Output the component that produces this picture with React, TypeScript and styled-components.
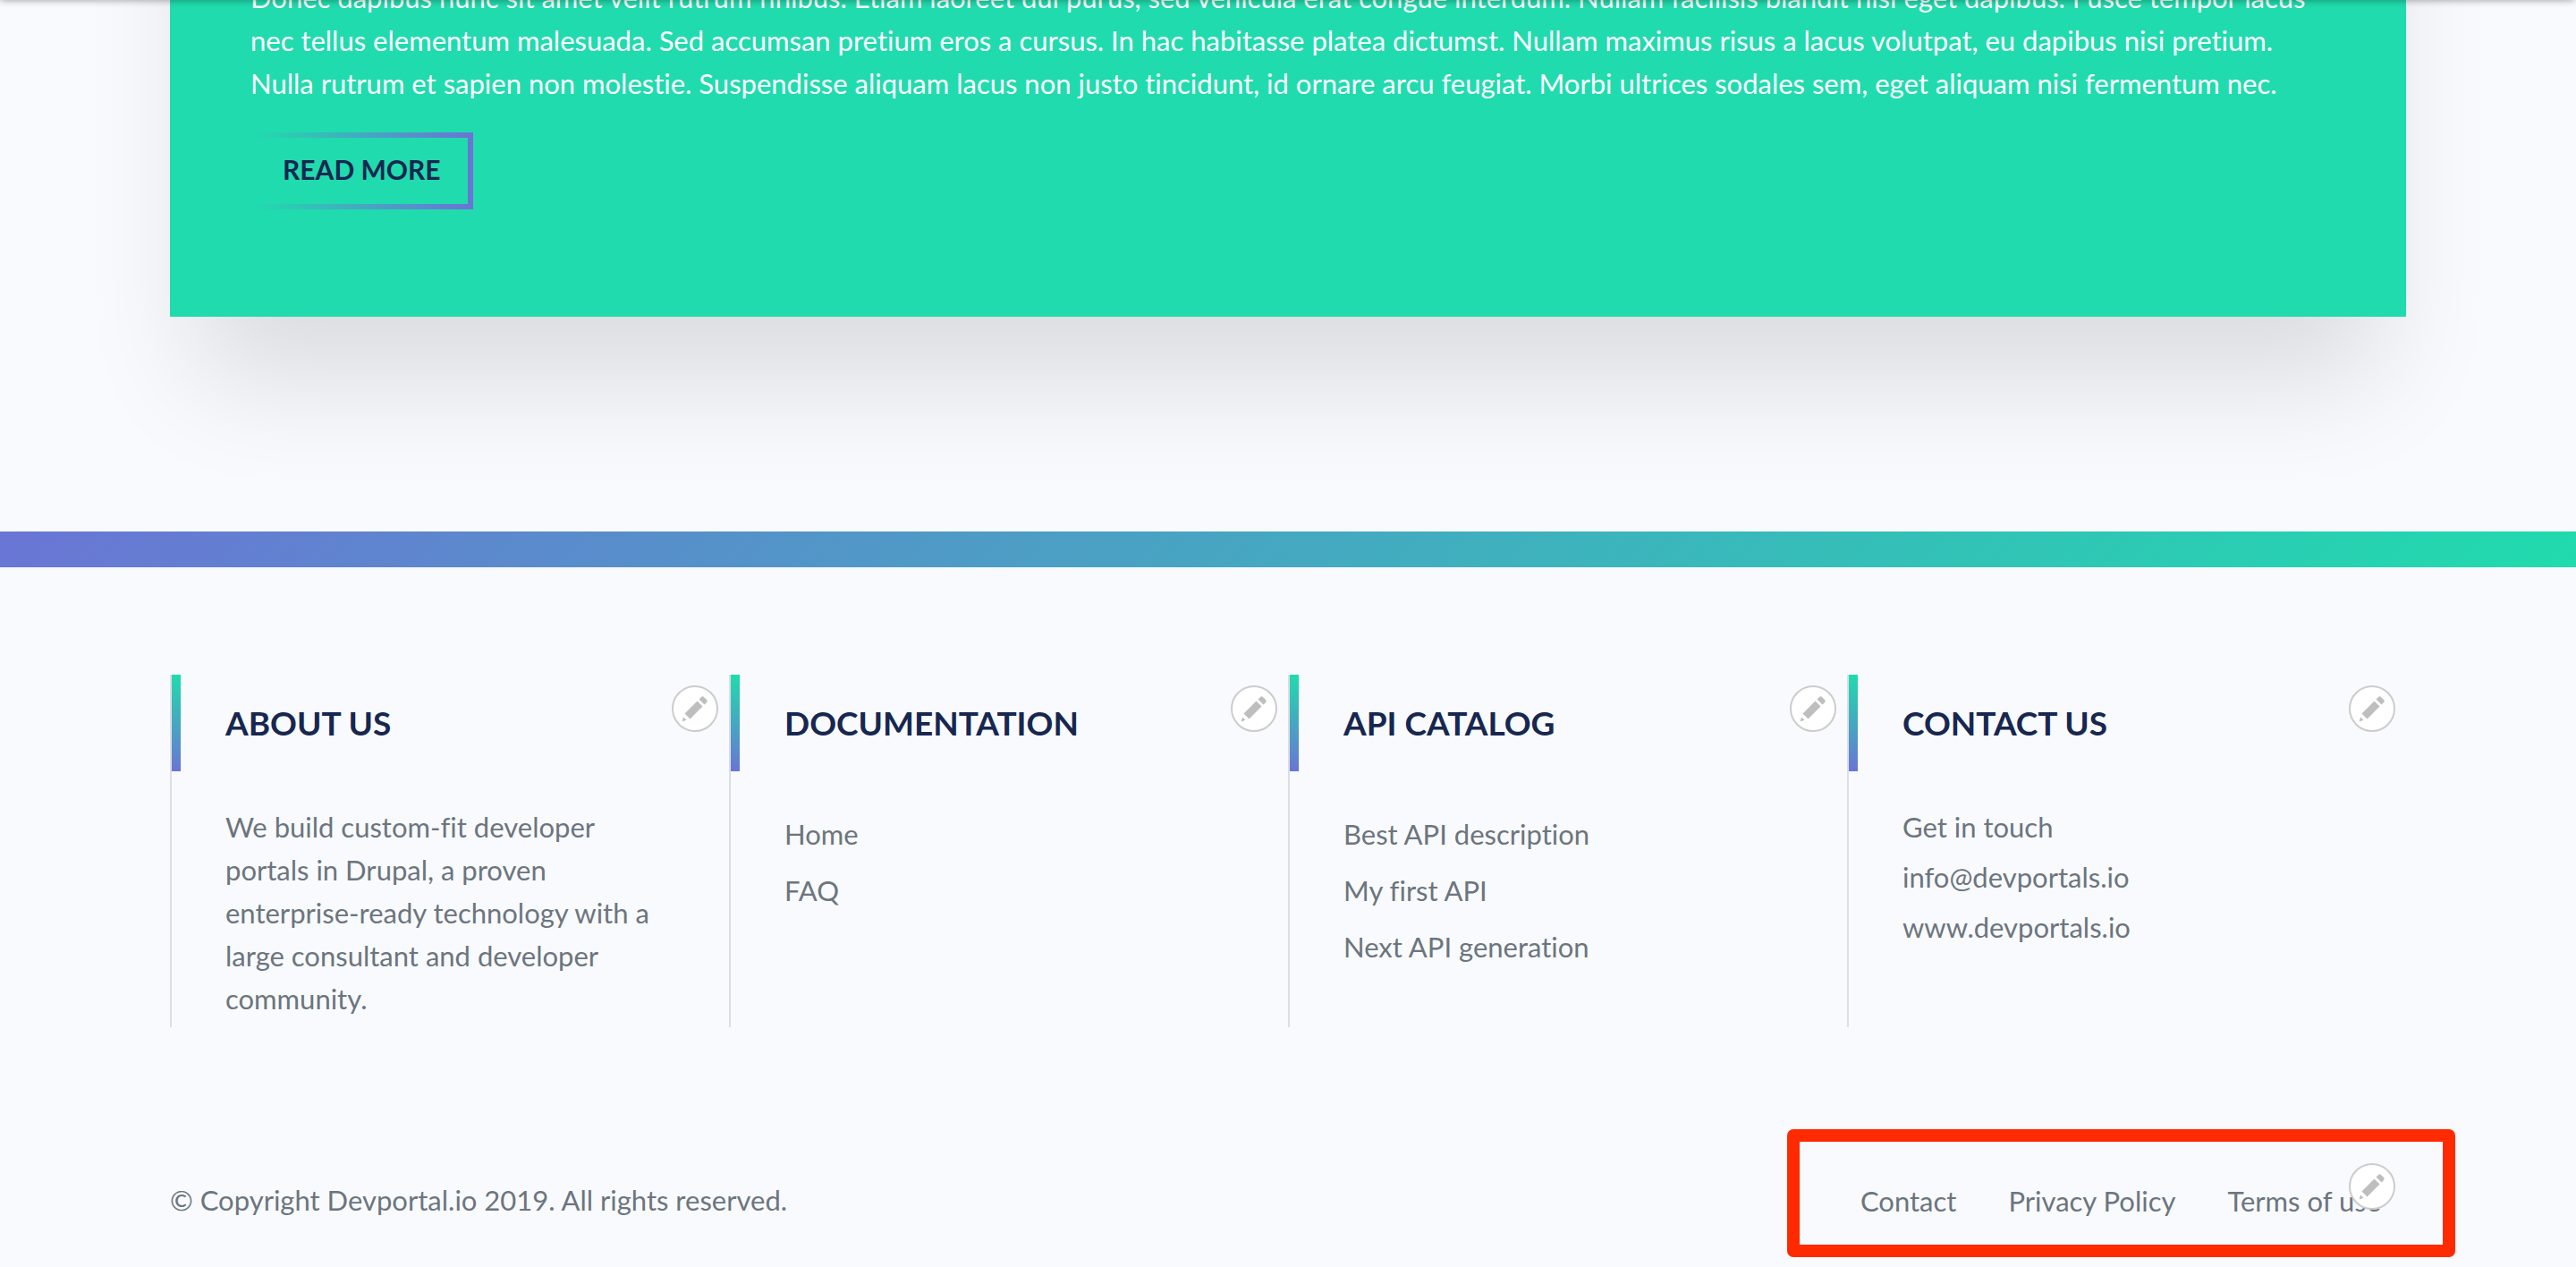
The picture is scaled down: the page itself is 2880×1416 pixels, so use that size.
import React from "react";
import styled, { createGlobalStyle } from "styled-components";

const colors = {
  page: "#f8fafe",
  green: "#20dbad",
  violet: "#6a75d5",
  navy: "#172750",
  text: "#6c757d",
  rule: "#dcdee4",
  mark: "#ff2a00",
};

const GlobalStyle = createGlobalStyle`
  *, *::before, *::after { box-sizing: border-box; }
  body {
    margin: 0;
    background: ${colors.page};
    color: ${colors.text};
    font-family: Lato, "Open Sans", sans-serif;
    font-size: 31px;
    font-variant-ligatures: none;
    line-height: 48px;
  }
  h2, p, ul { margin: 0; padding: 0; }
  ul { list-style: none; }
`;

const Page = styled.div`
  position: relative;
  min-height: 100vh;
  overflow: hidden;
`;

const TopShade = styled.div`
  position: absolute;
  z-index: 2;
  top: -8px;
  left: 0;
  right: 2px;
  height: 8px;
  box-shadow: 0 0 8px rgba(0, 0, 0, 0.4);
`;

const Container = styled.div`
  width: calc(100% - 120px);
  max-width: 2500px;
  margin: 0 auto;
`;

const Card = styled.section`
  display: flex;
  flex-direction: column;
  justify-content: flex-end;
  align-items: flex-start;
  gap: 31px;
  min-height: 754px;
  margin: -400px 0 240px;
  padding: 90px 90px 120px;
  background: ${colors.green};
  box-shadow: 0 100px 120px -30px rgba(0, 0, 0, 0.12);
`;

const Lead = styled.p`
  color: #fff;
`;

const ReadMore = styled.a`
  padding: 14px 30px 18px;
  border: 6px solid;
  border-image: linear-gradient(to right, transparent, ${colors.violet}) 1;
  color: ${colors.navy};
  font-size: 30px;
  font-weight: 700;
  line-height: 42px;
  text-decoration: none;
  text-transform: uppercase;
`;

const Footer = styled.footer`
  &::before {
    content: "";
    display: block;
    height: 40px;
    margin-bottom: 120px;
    background: linear-gradient(135deg, ${colors.violet}, ${colors.green});
  }
`;

const Columns = styled.div`
  display: grid;
  grid-template-columns: repeat(4, 1fr);
`;

const Column = styled.section`
  position: relative;
  padding: 0 80px 8px 60px;
  border-left: 2px solid ${colors.rule};

  &::before {
    content: "";
    position: absolute;
    top: 0;
    left: 0;
    width: 10px;
    height: 108px;
    background: linear-gradient(${colors.green}, ${colors.violet});
  }
`;

const Title = styled.h2`
  margin-bottom: 38px;
  color: ${colors.navy};
  font-size: 37px;
  font-weight: 700;
  line-height: 108px;
  text-transform: uppercase;
  white-space: nowrap;
`;

const LinkList = styled.ul`
  display: grid;
  gap: 15px;
  padding-top: 8px;
`;

const ContactList = styled.ul`
  display: grid;
  gap: 8px;
`;

const TextLink = styled.a`
  color: inherit;
  text-decoration: none;
  white-space: nowrap;
`;

const RoundButton = styled.button`
  position: absolute;
  top: 12px;
  right: 12px;
  display: grid;
  place-items: center;
  width: 52px;
  height: 52px;
  padding: 0;
  border: 2px solid #ccc;
  border-radius: 50%;
  background: #fff;
`;

const BottomRow = styled.div`
  display: flex;
  justify-content: space-between;
  margin-top: 140px;
`;

const Copyright = styled.p`
  padding: 29px 0;
`;

const LegalNav = styled.nav`
  position: relative;
  padding: 30px 28px;
`;

const LegalList = styled.ul`
  display: flex;
  gap: 58px;
`;

const Marker = styled.div`
  position: absolute;
  top: -26px;
  right: -55px;
  width: 747px;
  height: 143px;
  border: 14px solid ${colors.mark};
  border-radius: 7px;
  pointer-events: none;
`;

function EditButton({ label }: { label: string }) {
  return (
    <RoundButton type="button" aria-label={label}>
      <svg width="32" height="32" viewBox="0 0 16 16" fill="#bebebe" aria-hidden="true">
        <path d="M14.545 3.042l-1.586-1.585c-.389-.389-1.025-.389-1.414 0l-1.293 1.293 3 3 1.293-1.293c.389-.389.389-1.026 0-1.415z" />
        <rect
          x="5.129"
          y="3.8"
          width="4.243"
          height="9.899"
          transform="matrix(-.707 -.707 .707 -.707 6.189 20.064)"
        />
        <path d="M.908 14.775c-.087.262.055.397.316.312l2.001-.667-1.65-1.646-.667 2.001z" />
      </svg>
    </RoundButton>
  );
}

function FooterColumn({ title, children }: { title: string; children: React.ReactNode }) {
  return (
    <Column>
      <Title>{title}</Title>
      {children}
      <EditButton label={`Edit ${title}`} />
    </Column>
  );
}

function Links({ items }: { items: string[] }) {
  return (
    <>
      {items.map((item) => (
        <li key={item}>
          <TextLink href="#">{item}</TextLink>
        </li>
      ))}
    </>
  );
}

export default function App() {
  return (
    <Page>
      <GlobalStyle />
      <TopShade />
      <Container>
        <Card>
          <Lead>
            Donec dapibus nunc sit amet velit rutrum finibus. Etiam laoreet dui purus, sed vehicula
            erat congue interdum. Nullam facilisis blandit nisi eget dapibus. Fusce tempor lacus
            <br />
            nec tellus elementum malesuada. Sed accumsan pretium eros a cursus. In hac habitasse
            platea dictumst. Nullam maximus risus a lacus volutpat, eu dapibus nisi pretium.
            <br />
            Nulla rutrum et sapien non molestie. Suspendisse aliquam lacus non justo tincidunt, id
            ornare arcu feugiat. Morbi ultrices sodales sem, eget aliquam nisi fermentum nec.
          </Lead>
          <ReadMore href="#">Read more</ReadMore>
        </Card>
      </Container>
      <Footer>
        <Container>
          <Columns>
            <FooterColumn title="About us">
              <p>
                We build custom-fit developer
                <br />
                portals in Drupal, a proven
                <br />
                enterprise-ready technology with a
                <br />
                large consultant and developer
                <br />
                community.
              </p>
            </FooterColumn>
            <FooterColumn title="Documentation">
              <LinkList>
                <Links items={["Home", "FAQ"]} />
              </LinkList>
            </FooterColumn>
            <FooterColumn title="API catalog">
              <LinkList>
                <Links items={["Best API description", "My first API", "Next API generation"]} />
              </LinkList>
            </FooterColumn>
            <FooterColumn title="Contact us">
              <ContactList>
                <li>Get in touch</li>
                <Links items={["info@devportals.io", "www.devportals.io"]} />
              </ContactList>
            </FooterColumn>
          </Columns>
          <BottomRow>
            <Copyright>© Copyright Devportal.io 2019. All rights reserved.</Copyright>
            <LegalNav aria-label="Legal">
              <LegalList>
                <Links items={["Contact", "Privacy Policy", "Terms of use"]} />
              </LegalList>
              <EditButton label="Edit legal menu" />
              <Marker />
            </LegalNav>
          </BottomRow>
        </Container>
      </Footer>
    </Page>
  );
}
